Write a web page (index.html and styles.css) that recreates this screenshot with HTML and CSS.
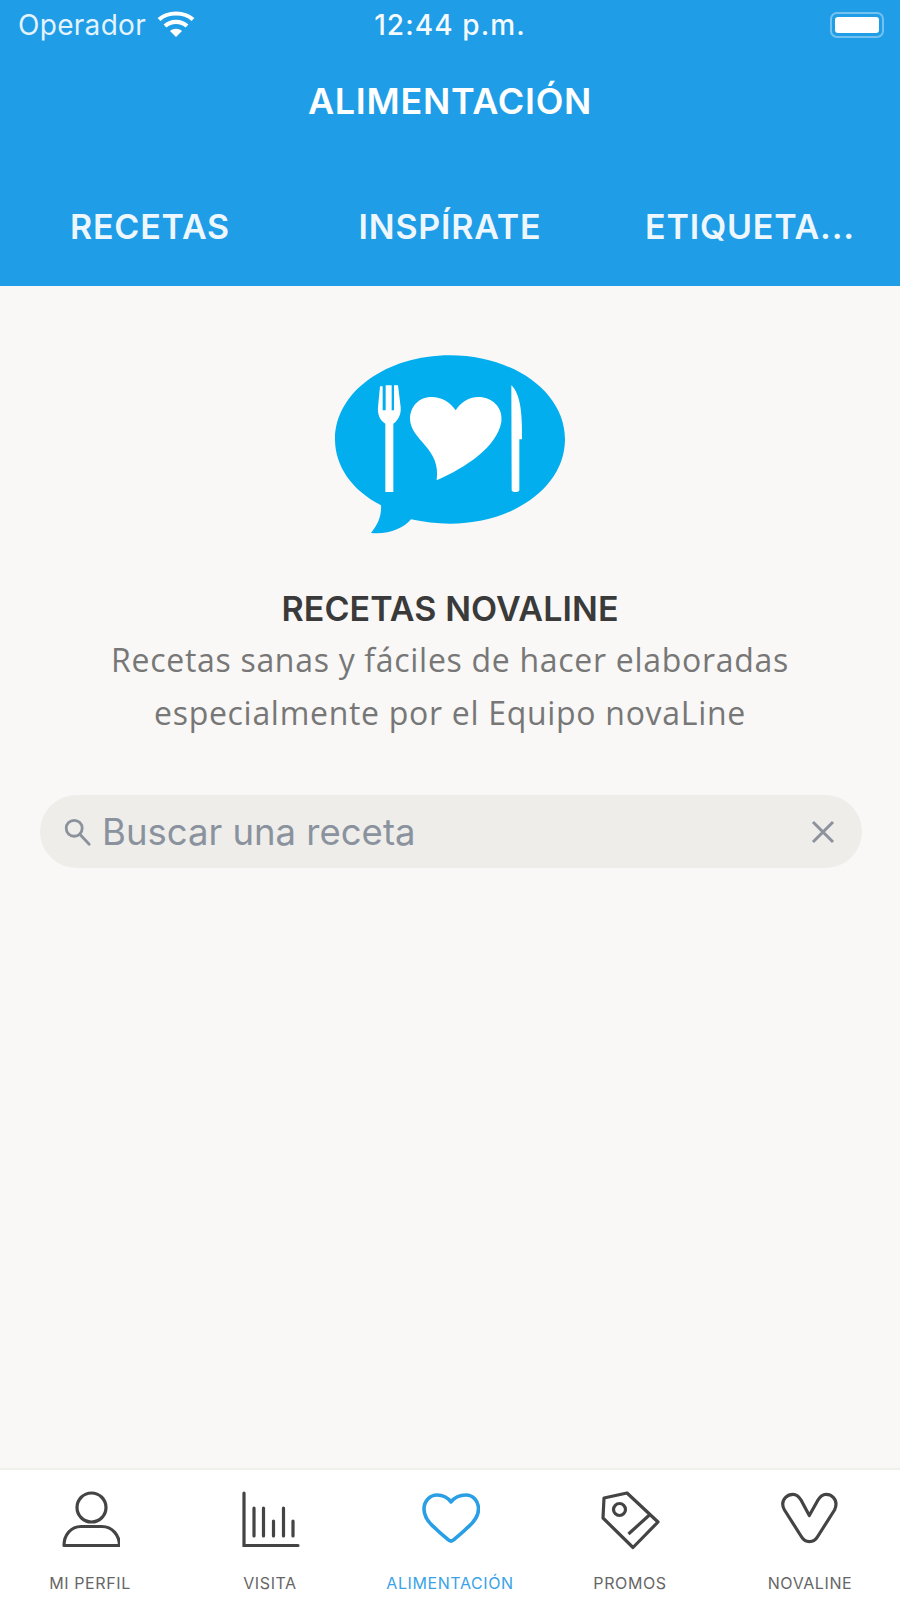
FILE: index.html
```html
<!DOCTYPE html>
<html lang="es">
<head>
  <meta charset="UTF-8">
  <meta name="viewport" content="width=device-width, initial-scale=1.0">
  <title>Alimentación</title>
  <link rel="stylesheet" href="styles.css">
</head>
<body>
<div class="app">
  <header class="top">
    <div class="status">
      <div class="status-left">
        <span>Operador</span>
        <svg class="wifi" width="38" height="28" viewBox="0 0 38 28" fill="none" stroke="#fff" stroke-width="4.2">
          <path d="M2 9.5C11 1.5 27 1.5 36 9.5"/>
          <path d="M8 16C14 10.5 24 10.5 30 16"/>
          <path d="M19 27l-6-6c3.500-3 8.500-3 12 0z" fill="#fff" stroke="none"/>
        </svg>
      </div>
      <span class="clock">12:44 p.m.</span>
      <div class="battery"><div class="battery-fill"></div></div>
    </div>
    <h1 class="title">ALIMENTACIÓN</h1>
    <nav class="tabs">
      <a>RECETAS</a>
      <a>INSPÍRATE</a>
      <a>ETIQUETA...</a>
    </nav>
  </header>

  <main class="content">
    <svg class="logo" width="280" height="200" viewBox="0 0 840 600">
      <path d="M420 40C610 40 765 150 765 292C765 435 610 545 420 545C380 545 340 540 303 532C280 560 235 578 183 573C205 545 215 520 213 490C125 445 75 372 75 292C75 150 230 40 420 40Z" fill="#03aeef"/>
      <!-- fourchette -->
      <path d="M226 450V245C210 235 202 218 204 195L210 133H218V205H227V130H245V205H252V130H264L272 195C274 218 264 236 250 245V450Z" fill="#fff"/>
      <!-- coeur -->
      <path d="M437 205C420 178 390 163 360 165C325 167 300 195 300 232C302 295 395 320 380 415C470 375 560 315 574 240C580 195 545 165 505 165C475 165 450 183 437 205Z" fill="#fff"/>
      <!-- couteau -->
      <path d="M604 130C625 150 638 190 636 292H628V445C628 452 605 452 605 445Z" fill="#fff"/>
    </svg>
    <h2 class="heading">RECETAS NOVALINE</h2>
    <p class="desc">Recetas sanas y fáciles de hacer elaboradas<br>especialmente por el Equipo novaLine</p>
    <div class="search">
      <svg width="30" height="30" viewBox="0 0 32 32" fill="none" stroke="#8b929c" stroke-width="3">
        <circle cx="13" cy="12" r="8.500"/>
        <path d="M19 18.500L29 29" stroke-linecap="round"/>
      </svg>
      <span class="search-text">Buscar una receta</span>
      <svg class="search-x" width="26" height="26" viewBox="0 0 26 26" fill="none" stroke="#8b929c" stroke-width="3">
        <path d="M3 3L23 23M23 3L3 23"/>
      </svg>
    </div>
  </main>

  <footer class="tabbar">
    <a class="tab">
      <svg width="60" height="60" viewBox="0 0 60 60" fill="none" stroke="#444" stroke-width="3.200" stroke-linejoin="round">
        <circle cx="31.500" cy="17.500" r="14.500"/>
        <path d="M4 55.500C4 45 11 36.500 21 36.500H42C52 36.500 59.500 45 59.500 55.500Z"/>
      </svg>
      <span>MI PERFIL</span>
    </a>
    <a class="tab">
      <svg width="60" height="60" viewBox="0 0 60 60" fill="none" stroke="#444" stroke-width="3.200" stroke-linecap="round">
        <path d="M4 3V55.500H58"/>
        <path d="M14 18V46M23.500 18V46M33.500 31V46M43.500 18V46M53 31V46"/>
      </svg>
      <span>VISITA</span>
    </a>
    <a class="tab active">
      <svg width="60" height="60" viewBox="0 0 60 60" fill="none" stroke="#2a9fe6" stroke-width="3.600" stroke-linejoin="round">
        <path d="M31 12C28 8 23 5 17 5C10 5 4 11 4 19C4 26 9 33 15 38C20 43 25 47 28 49.500C30 51.500 32 51.500 34 49.500C37 47 42 43 47 38C53 33 58.500 26 58.500 19C58.500 11 53 5 46 5C40 5 34 8 31 12Z"/>
      </svg>
      <span>ALIMENTACIÓN</span>
    </a>
    <a class="tab">
      <svg width="60" height="60" viewBox="0 0 60 60" fill="none" stroke="#444" stroke-width="3.200" stroke-linejoin="round">
        <path d="M4 8L27 3L58 32L33 57.500L3 28Z"/>
        <circle cx="19.500" cy="19.500" r="6"/>
        <path d="M28.500 44L50.500 24"/>
      </svg>
      <span>PROMOS</span>
    </a>
    <a class="tab">
      <svg width="60" height="60" viewBox="0 0 60 60" fill="none" stroke="#444" stroke-width="3.200" stroke-linejoin="round">
        <path d="M29.300 25.500L21 10C19 6.500 16.500 4.300 13 4.300C7 4.300 2.700 9 2.700 14C2.700 16 3.300 18 4.500 20L21 46C23 49.500 26 51.700 29.500 51.700C33 51.700 36 49.500 38 46L54.500 20C55.500 18 56 16 56 14C56 9 52 4.300 46 4.300C42.500 4.300 40 6.500 38 10Z"/>
      </svg>
      <span>NOVALINE</span>
    </a>
  </footer>
</div>
</body>
</html>
```

FILE: styles.css
```css
* { box-sizing: border-box; }
body { margin: 0; background: #f9f8f6; font-family: Inter, "Liberation Sans", sans-serif; }
.app {
  width: 900px;
  height: 1598px;
  display: flex;
  flex-direction: column;
  overflow: hidden;
}

/* bandeau bleu */
.top {
  height: 286px;
  background: #1f9de6;
  color: #fff;
  display: flex;
  flex-direction: column;
}
.status {
  height: 50px;
  padding: 0 18px;
  display: grid;
  grid-template-columns: 1fr auto 1fr;
  align-items: center;
  font-size: 28px;
  letter-spacing: 0.3px;
  color: #e4f3fd;
}
.status-left { display: flex; align-items: center; gap: 11px; }
.clock { font-weight: 500; letter-spacing: 1.1px; color: #f4fafe; }
.wifi { display: block; margin-top: -2px; }
.battery {
  justify-self: end;
  width: 54px;
  height: 26px;
  margin-right: -2px;
  padding: 3px;
  border: 2px solid #73c1f0;
  border-radius: 7px;
}
.battery-fill { height: 100%; background: #fff; border-radius: 3px; }
.title {
  margin: 0;
  height: 102px;
  padding-top: 28px;
  text-align: center;
  font-size: 36px;
  line-height: 46px;
  font-weight: 600;
  letter-spacing: 0.7px;
}
.tabs {
  display: grid;
  grid-template-columns: repeat(3, 1fr);
  padding-top: 52px;
  font-size: 34px;
  line-height: 46px;
  font-weight: 600;
  letter-spacing: 0.8px;
  text-align: center;
  color: #eef7fd;
}

/* contenu */
.content {
  flex: 1;
  display: flex;
  flex-direction: column;
  align-items: center;
  padding-top: 56px;
}
.logo { display: block; }
.heading {
  margin: 45px 0 0;
  font-size: 34px;
  line-height: 44px;
  font-weight: 600;
  letter-spacing: 0.1px;
  color: #3a3a3a;
}
.desc {
  margin: 2px 0 0;
  text-align: center;
  font-family: "Open Sans", sans-serif;
  font-size: 32px;
  line-height: 53px;
  letter-spacing: 0.7px;
  color: #777;
}
.search {
  width: 822px;
  height: 73px;
  margin: 56px 0 0 2px;
  padding: 0 26px 0 22px;
  display: flex;
  align-items: center;
  gap: 10px;
  background: #eeedea;
  border-radius: 37px;
}
.search-text { font-size: 36.5px; color: #8a929e; }
.search-x { margin-left: auto; }

/* barre du bas */
.tabbar {
  height: 130px;
  background: #fff;
  border-top: 2px solid #f0efec;
  display: grid;
  grid-template-columns: repeat(5, 1fr);
}
.tab {
  display: flex;
  flex-direction: column;
  align-items: center;
  padding-top: 20px;
  font-size: 16px;
  line-height: 20px;
  letter-spacing: 0.6px;
  color: #666;
}
.tab svg { display: block; margin-bottom: 23px; }
.tab.active { color: #3aa3e6; }
```
